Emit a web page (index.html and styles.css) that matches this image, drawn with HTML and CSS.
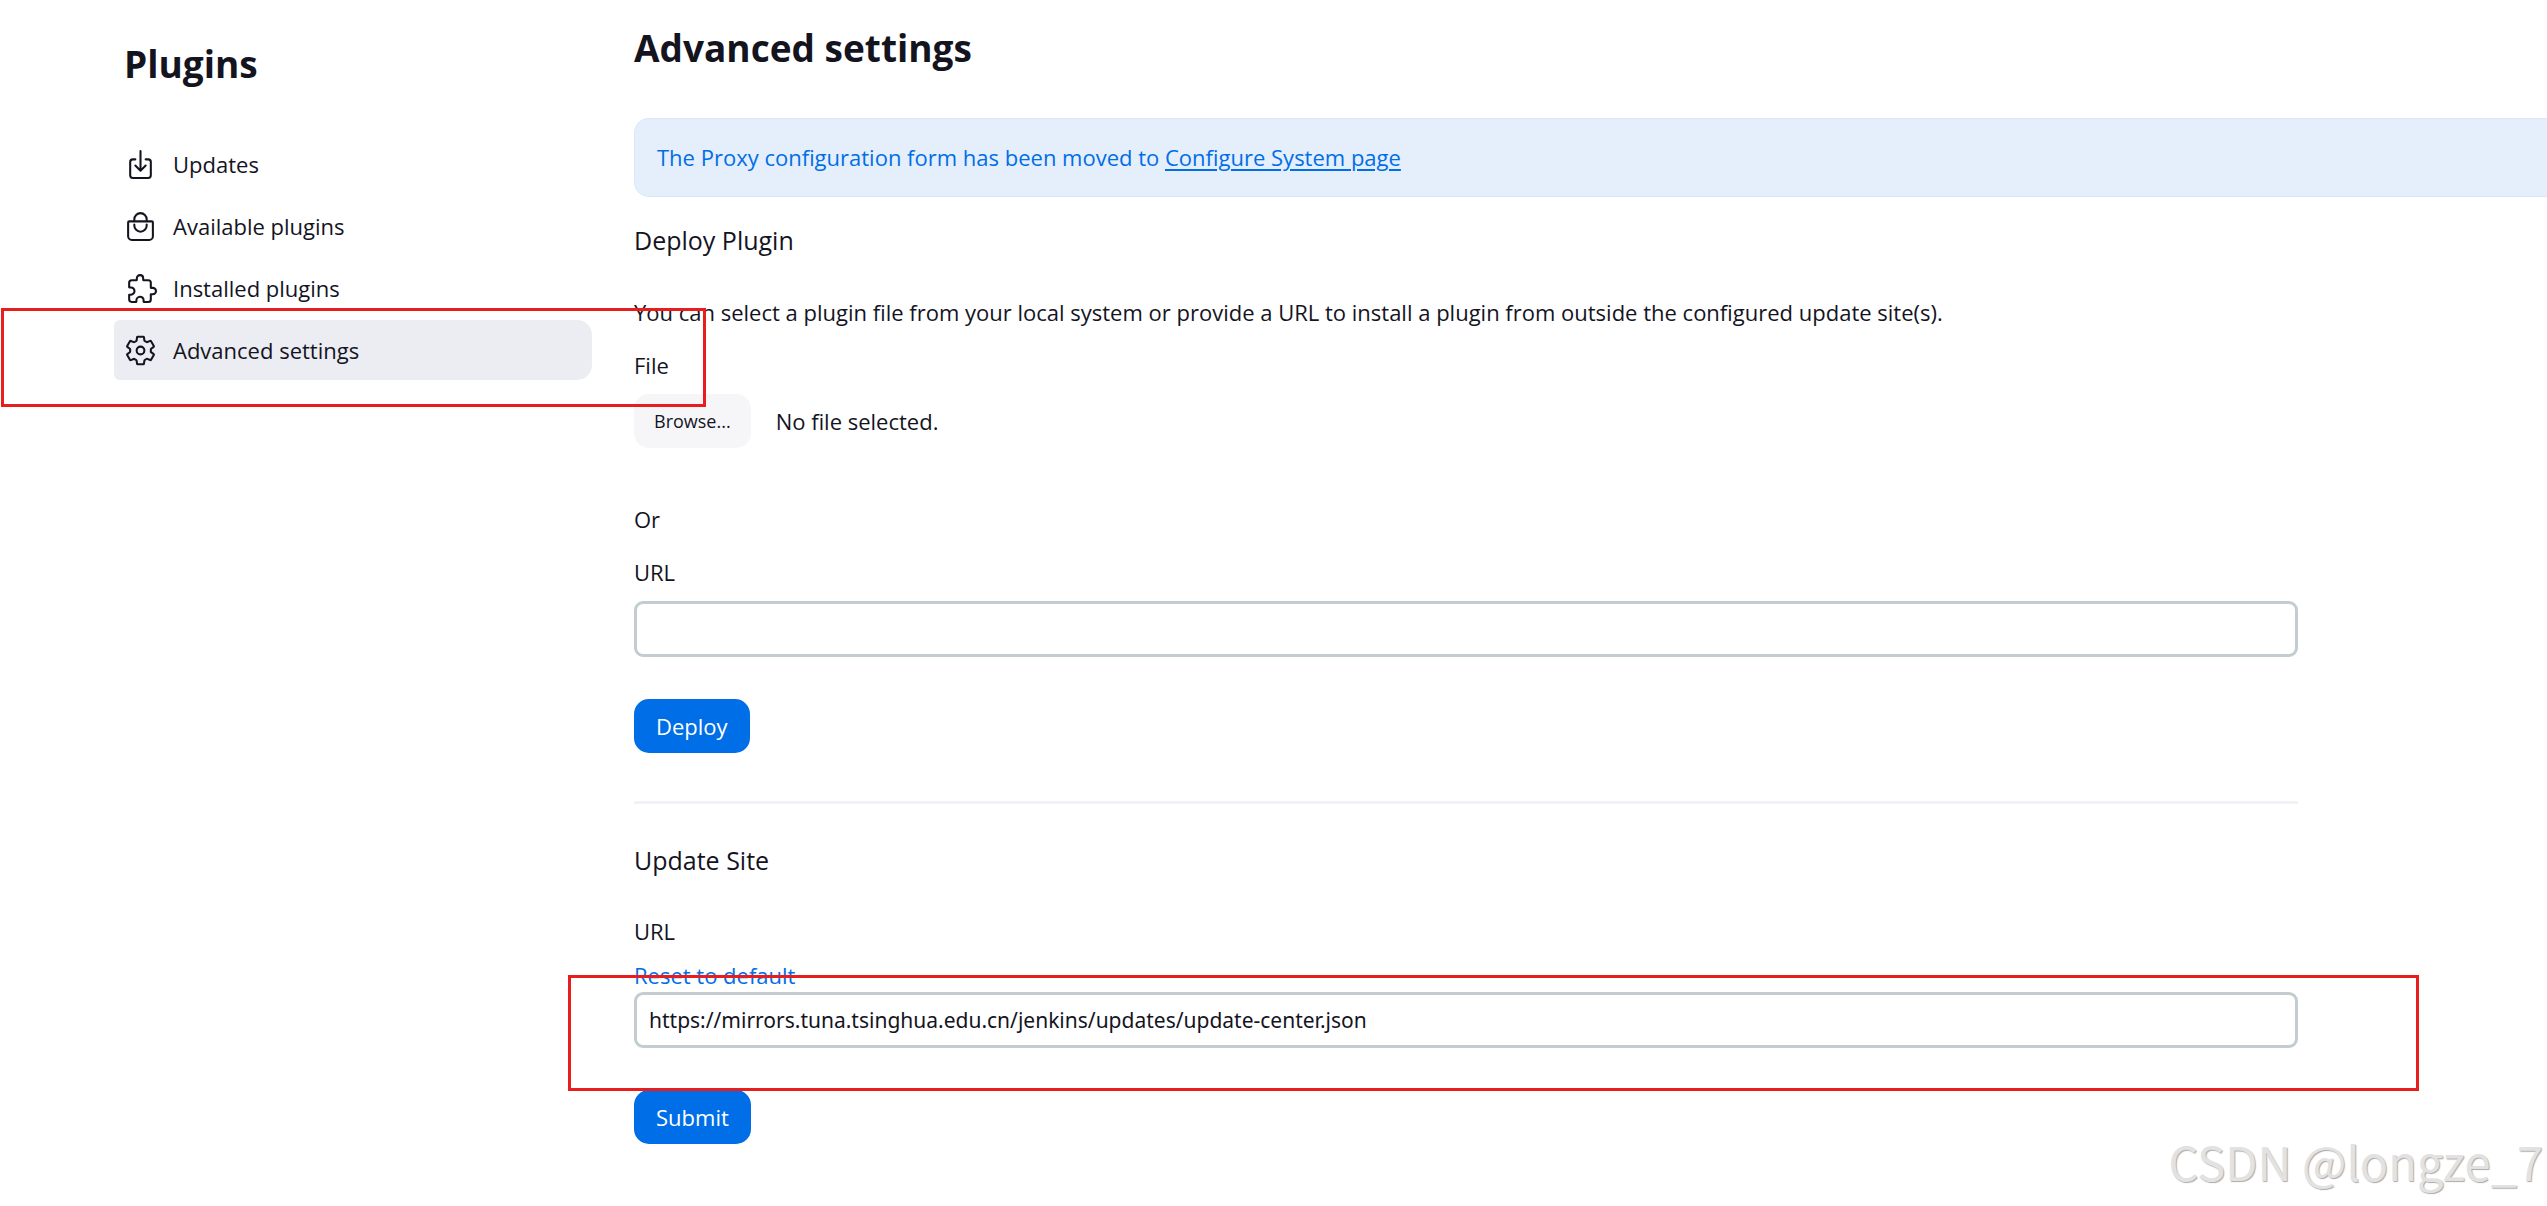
FILE: index.html
```html
<!DOCTYPE html>
<html lang="en">
  <head>
    <meta charset="UTF-8" />
    <title>Advanced settings – Plugins</title>
    <link rel="stylesheet" href="styles.css">
  </head>
  <body>
    <div class="page">
      <aside class="sidebar">
        <h1>Plugins</h1>
        <nav class="tasks">
          <a class="task" href="#updates">
            <svg class="icon" viewBox="0 0 512 512"><path d="M336 176h40a40 40 0 0140 40v208a40 40 0 01-40 40H136a40 40 0 01-40-40V216a40 40 0 0140-40h40M176 272l80 80 80-80M256 48v288"/></svg>
            Updates
          </a>
          <a class="task" href="#available">
            <svg class="icon" viewBox="0 0 512 512"><path d="M80 176a16 16 0 00-16 16v216c0 30.24 25.76 56 56 56h272c30.24 0 56-24.51 56-54.75V192a16 16 0 00-16-16zM160 176v-32a96 96 0 0196-96h0a96 96 0 0196 96v32M160 224v16a96 96 0 0096 96h0a96 96 0 0096-96v-16"/></svg>
            Available plugins
          </a>
          <a class="task" href="#installed">
            <svg class="icon" viewBox="-32 0 512 512"><path d="M413.66 246.1H386a2 2 0 01-2-2v-77.24A38.86 38.86 0 00345.14 128H267.9a2 2 0 01-2-2V98.34c0-27.14-21.5-49.86-48.64-50.33a49.53 49.53 0 00-50.4 49.51V126a2 2 0 01-2 2H87.62A39.74 39.74 0 0048 167.62V238a2 2 0 002 2h26.91c29.37 0 53.68 25.48 54.09 54.85.42 29.87-23.51 57.15-53.29 57.15H50a2 2 0 00-2 2v70.38A39.74 39.74 0 0087.62 464H158a2 2 0 002-2v-20.93c0-30.28 24.75-56.35 55-57.06 30.1-.7 57 20.31 57 50.28V462a2 2 0 002 2h71.14A38.86 38.86 0 00384 425.14v-78a2 2 0 012-2h28.48c27.63 0 49.52-22.67 49.52-50.4s-23.7-48.64-50.34-48.64z"/></svg>
            Installed plugins
          </a>
          <a class="task active" href="#advanced">
            <svg class="icon" viewBox="0 0 512 512"><circle cx="256" cy="256" r="60"/><path d="M416.39 256a154.34 154.34 0 01-1.53 20.79l45.21 35.46a10.81 10.81 0 012.45 13.75l-42.77 74a10.81 10.81 0 01-13.14 4.59l-44.9-18.08a16.11 16.11 0 00-15.17 1.75A164.48 164.48 0 01325 400.8a15.94 15.94 0 00-8.82 12.14l-6.73 47.89a11.08 11.08 0 01-10.68 9.17h-85.54a11.11 11.11 0 01-10.69-8.87l-6.72-47.82a16.07 16.07 0 00-9-12.22 155.3 155.3 0 01-21.46-12.57 16 16 0 00-15.11-1.71l-44.89 18.07a10.81 10.81 0 01-13.14-4.58l-42.77-74a10.8 10.8 0 012.45-13.75l38.21-30a16.05 16.05 0 006-14.08c-.36-4.17-.58-8.33-.58-12.5s.21-8.27.58-12.35a16 16 0 00-6.07-13.94l-38.19-30A10.81 10.81 0 0149.48 186l42.77-74a10.81 10.81 0 0113.14-4.59l44.9 18.08a16.11 16.11 0 0015.17-1.75A164.48 164.48 0 01187 111.2a15.94 15.94 0 008.82-12.14l6.73-47.89A11.08 11.08 0 01213.23 42h85.54a11.11 11.11 0 0110.69 8.87l6.72 47.82a16.07 16.07 0 009 12.22 155.3 155.3 0 0121.46 12.57 16 16 0 0015.11 1.71l44.89-18.07a10.81 10.81 0 0113.14 4.58l42.77 74a10.8 10.8 0 01-2.45 13.75l-38.21 30a16.05 16.05 0 00-6.05 14.08c.33 4.14.55 8.3.55 12.47z"/></svg>
            Advanced settings
          </a>
        </nav>
      </aside>

      <main class="main">
        <h1>Advanced settings</h1>
        <div class="alert">
          The Proxy configuration form has been moved to <a href="#configure">Configure System page</a>
        </div>

        <form id="deployForm" class="section">
          <h2>Deploy Plugin</h2>
          <p class="text">You can select a plugin file from your local system or provide a URL to install a plugin from outside the configured update site(s).</p>
          <label for="file">File</label>
          <div class="file-row">
            <input id="file" type="file" hidden />
            <button id="browse" class="browse" type="button">Browse...</button>
            <span id="fileName">No file selected.</span>
          </div>
          <p class="or">Or</p>
          <label for="deployUrl">URL</label>
          <input id="deployUrl" class="field" type="text" />
          <button class="btn" type="submit">Deploy</button>
        </form>

        <hr />

        <form id="siteForm" class="section">
          <h2>Update Site</h2>
          <label class="site-label" for="siteUrl">URL</label>
          <a class="reset" href="#reset">Reset to default</a>
          <input id="siteUrl" class="field site-field" type="text" value="https://mirrors.tuna.tsinghua.edu.cn/jenkins/updates/update-center.json" />
          <button class="btn" type="submit">Submit</button>
        </form>
      </main>
    </div>

    <!-- highlight boxes and watermark over the page -->
    <div class="mark mark-nav"></div>
    <div class="mark mark-site"></div>
    <div class="watermark">CSDN @longze_7</div>

    <script>
      const file = document.getElementById("file");
      const fileName = document.getElementById("fileName");

      // Open the file picker from the Browse button
      document.getElementById("browse").addEventListener("click", () => file.click());

      // Show the name of the selected file
      file.addEventListener("change", () => {
        fileName.textContent = file.files.length ? file.files[0].name : "No file selected.";
      });
    </script>
  </body>
</html>
```
FILE: styles.css
```css
* {
  box-sizing: border-box;
}
body {
  margin: 0;
  position: relative;
  min-height: 100vh;
  background: #fff;
  font-family: "Open Sans", "Segoe UI", sans-serif;
  font-size: 22px;
  line-height: 33px;
  color: #14141f;
}
h1, h2, p {
  margin: 0;
}
h1 {
  font-size: 37px;
  line-height: 48px;
}
h2 {
  font-size: 25px;
  line-height: 38px;
  font-weight: 400;
}
a {
  color: #006ee6;
}

/* Sidebar */
.page {
  display: flex;
  gap: 42px;
  padding-left: 114px;
}
.sidebar {
  flex: none;
  width: 478px;
  padding-top: 40px;
}
.sidebar h1 {
  padding-left: 10px;
}
.tasks {
  display: flex;
  flex-direction: column;
  gap: 2px;
  margin-top: 46px;
}
.task {
  display: flex;
  align-items: center;
  gap: 16px;
  height: 60px;
  padding-left: 10px;
  border-radius: 6px 15px 15px 6px;
  color: #14141f;
  text-decoration: none;
}
.task.active {
  background: #ecedf3;
}
.icon {
  width: 33px;
  height: 33px;
  fill: none;
  stroke: #14141f;
  stroke-width: 32;
  stroke-linecap: round;
  stroke-linejoin: round;
  overflow: visible;
}

/* Main panel */
.main {
  flex: 1;
  min-width: 0;
  padding-top: 24px;
}
.alert {
  margin: 46px 0 24px;
  padding: 22px;
  border: 1px solid #d6e9fa;
  border-right: none;
  border-radius: 15px 0 0 15px;
  background: #e5effb;
  color: #006ee6;
}
.alert a {
  text-underline-offset: 3px;
}
.section {
  display: flex;
  flex-direction: column;
  align-items: flex-start;
  max-width: 1664px;
}
.text {
  margin: 37px 0 20px;
}
.file-row {
  display: flex;
  align-items: center;
  gap: 25px;
  margin: 12px 0 55px;
}
.or {
  margin-bottom: 20px;
}
.browse,
.btn {
  height: 54px;
  border: none;
  border-radius: 15px;
  font-family: inherit;
  cursor: pointer;
}
.browse {
  padding: 0 20px;
  background: #f6f6f9;
  font-size: 18px;
  color: #14141f;
}
.btn {
  padding: 0 22px;
  background: #006ee6;
  font-size: 22px;
  color: #fff;
}
.field {
  width: 100%;
  height: 56px;
  margin: 12px 0 42px;
  padding: 0 12px;
  border: 3px solid #c3ccd1;
  border-radius: 9px;
  background: #fff;
  font-family: "Noto Sans", "Segoe UI", sans-serif;
  font-size: 21px;
  color: #14141f;
}
hr {
  max-width: 1664px;
  height: 3px;
  margin: 48px 0 37px;
  border: none;
  background: #f1f1f7;
}
.site-label {
  margin: 36px 0 11px;
}
.reset {
  text-decoration: none;
}
.site-field {
  margin-top: 0;
}

/* Overlays */
.mark {
  position: absolute;
  border: 3px solid #e81e1e;
}
.mark-nav {
  left: 1px;
  top: 308px;
  width: 705px;
  height: 99px;
}
.mark-site {
  left: 568px;
  top: 975px;
  width: 1851px;
  height: 116px;
}
.watermark {
  position: absolute;
  right: 4px;
  bottom: 13px;
  font-family: "Noto Sans CJK SC", sans-serif;
  font-size: 47px;
  line-height: 64px;
  color: #e2e2e2;
  text-shadow: 1px 1px 1px #aaa;
}
```
